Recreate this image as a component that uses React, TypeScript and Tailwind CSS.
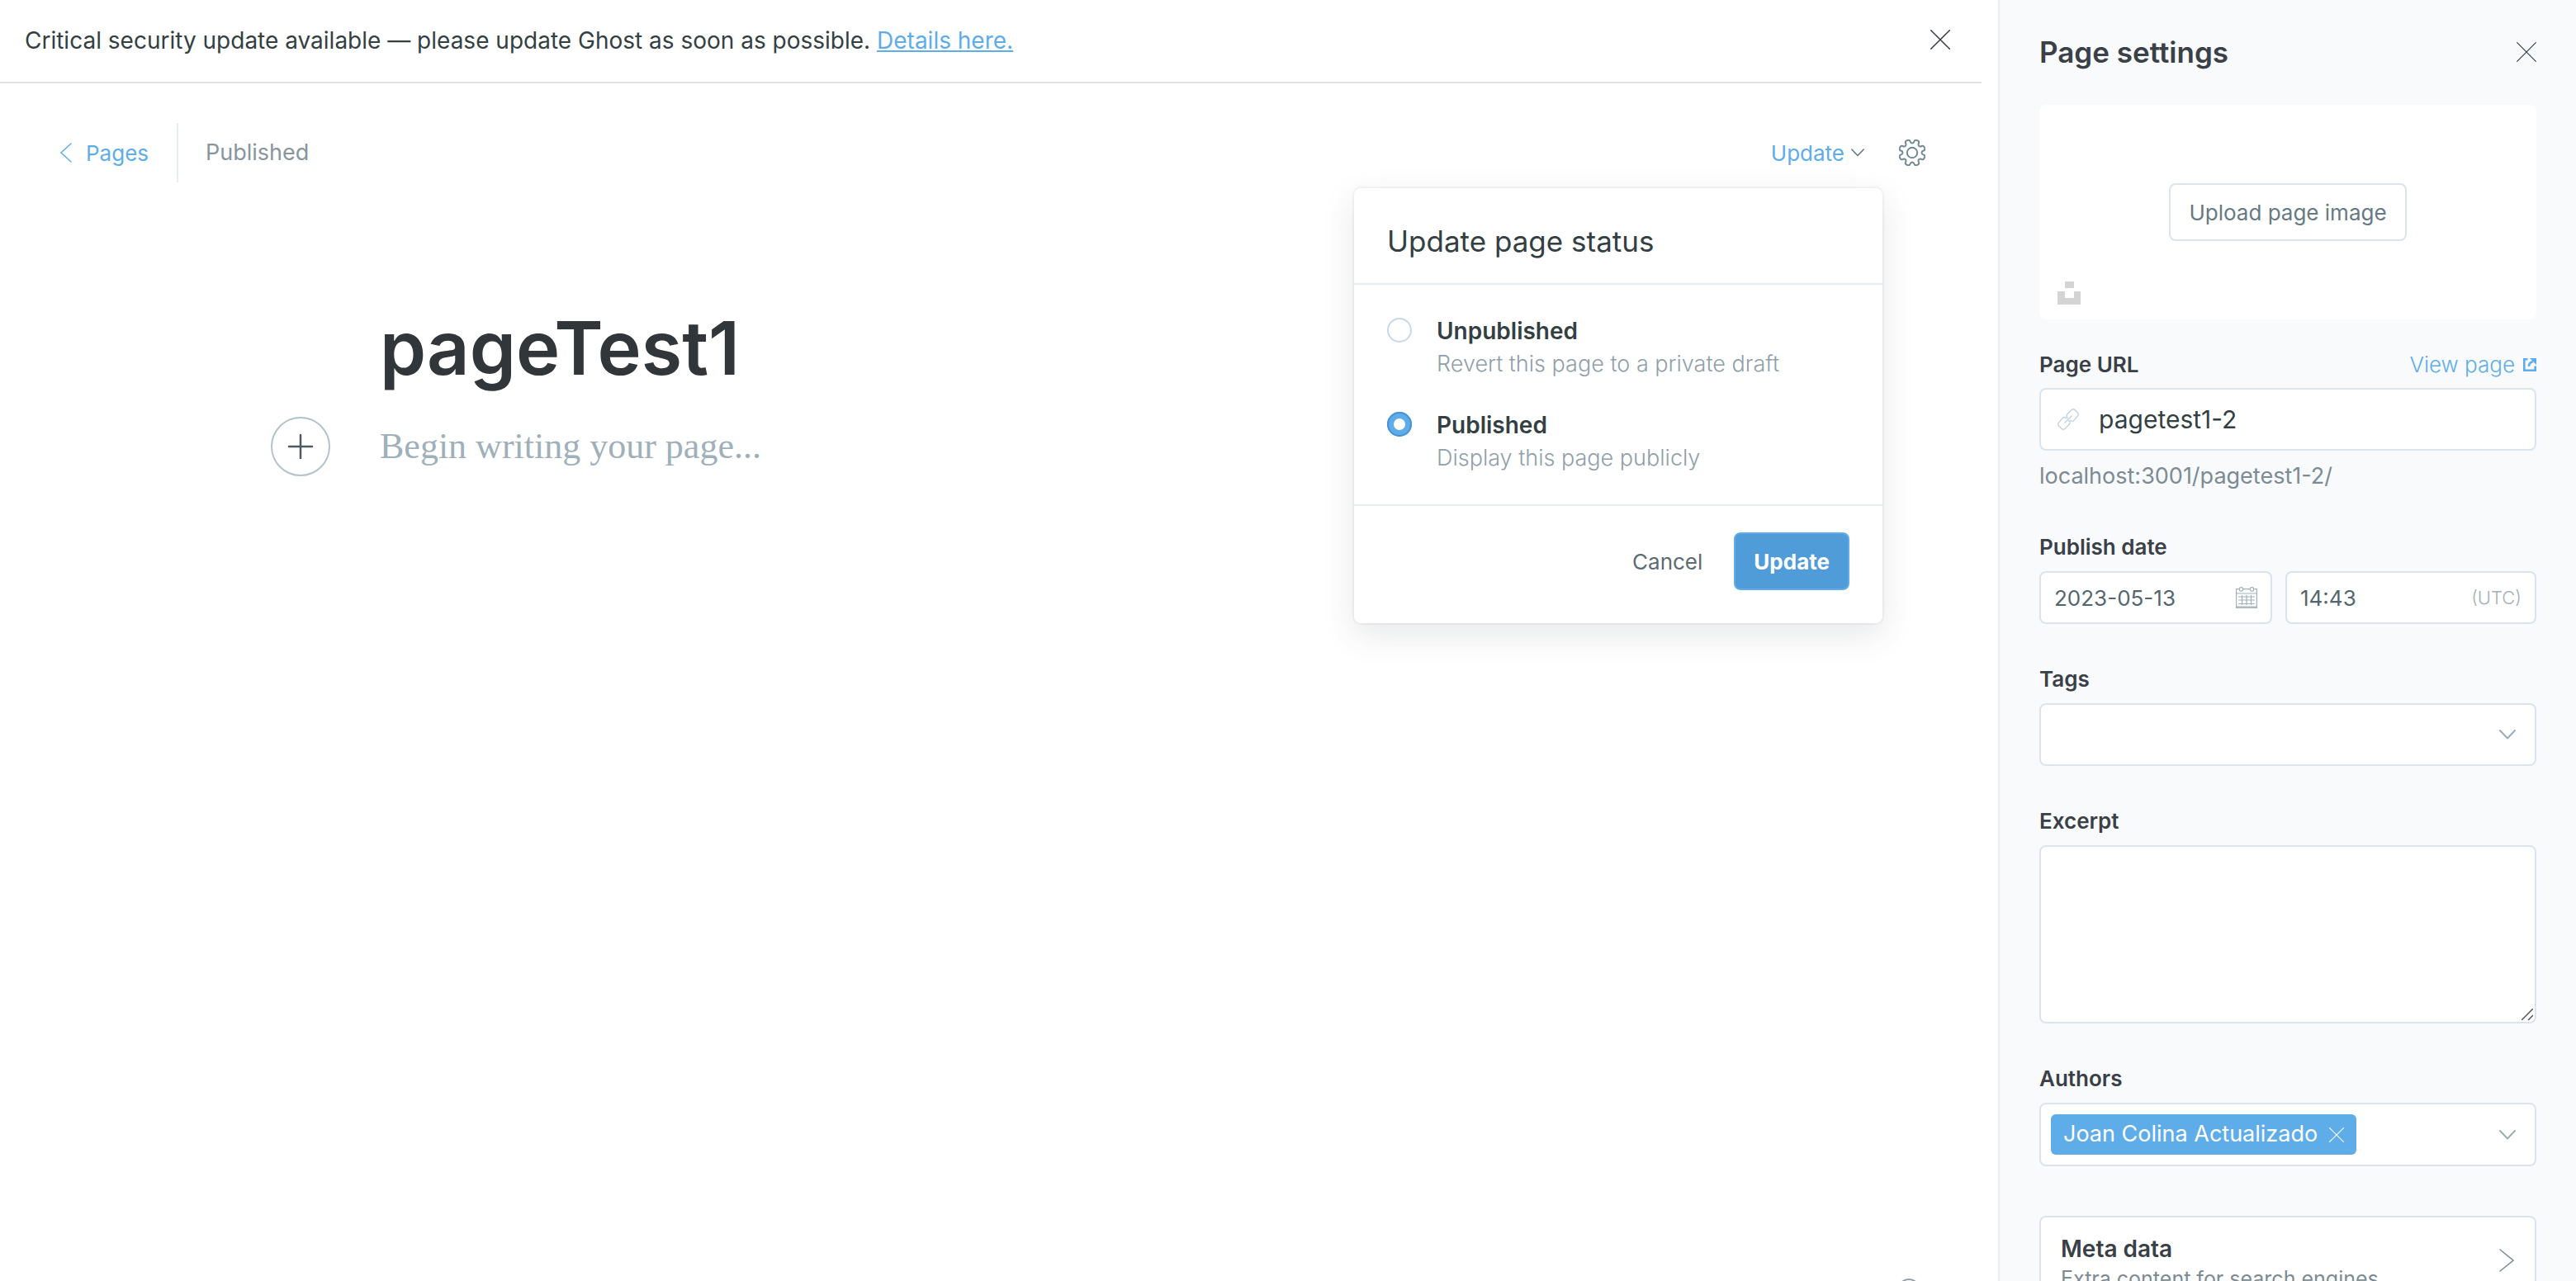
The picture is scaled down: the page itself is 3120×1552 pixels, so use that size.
import React, { useState } from "react";

type IconProps = { className?: string };

function Close({ className = "" }: IconProps) {
  return (
    <svg className={className} viewBox="0 0 24 24" fill="none" stroke="currentColor" aria-hidden="true">
      <path d="M.7.7l22.600 22.600M23.300.7L.7 23.300" strokeLinecap="round" />
    </svg>
  );
}

function ChevronDown({ className = "" }: IconProps) {
  return (
    <svg className={className} viewBox="0 0 20 12" fill="none" stroke="currentColor" aria-hidden="true">
      <path d="M1 1l9 9.500L19 1" strokeLinecap="round" strokeLinejoin="round" />
    </svg>
  );
}

// Eight-toothed cog outline: a polygon whose corners are rounded with quadratic curves.
function cogPath(center: number, outer: number, inner: number) {
  const points: [number, number][] = [];
  for (let tooth = 0; tooth < 8; tooth++) {
    const middle = 22.5 + tooth * 45;
    const corners: [number, number][] = [
      [-14, inner],
      [-11, outer],
      [11, outer],
      [14, inner],
    ];
    for (const [offset, radius] of corners) {
      const angle = ((middle + offset) * Math.PI) / 180;
      points.push([center + radius * Math.cos(angle), center + radius * Math.sin(angle)]);
    }
  }
  const between = (a: [number, number], b: [number, number]) =>
    `${((a[0] + b[0]) / 2).toFixed(2)} ${((a[1] + b[1]) / 2).toFixed(2)}`;
  const last = points[points.length - 1];
  let path = `M${between(last, points[0])}`;
  points.forEach((point, i) => {
    const next = points[(i + 1) % points.length];
    path += `Q${point[0].toFixed(2)} ${point[1].toFixed(2)} ${between(point, next)}`;
  });
  return path + "Z";
}

const COG = cogPath(16, 16.4, 11.6);

function Gear({ className = "" }: IconProps) {
  return (
    <svg className={className} viewBox="0 0 32 32" fill="none" stroke="currentColor" strokeWidth="2" aria-hidden="true">
      <path d={COG} />
      <circle cx="16" cy="16" r="6.200" />
    </svg>
  );
}

function ExternalLink({ className = "" }: IconProps) {
  return (
    <svg className={className} viewBox="0 0 16 16" fill="none" stroke="currentColor" strokeWidth="2.600" aria-hidden="true">
      <path d="M5.500 1.300H1.300v13.400h13.400V9.500" />
      <path d="M6.800 9.800c.3-3 2-5 5-5.800" />
      <path d="M8 0H16v8z" fill="currentColor" stroke="none" />
    </svg>
  );
}

function LinkIcon({ className = "" }: IconProps) {
  return (
    <svg className={className} viewBox="0 0 26 26" fill="none" stroke="currentColor" strokeWidth="1.400" strokeLinecap="round" strokeLinejoin="round" aria-hidden="true">
      <path d="M9 17l8-8" />
      <path d="M10.500 11.500L9.400 10.800a2.800 2.800 0 0 0-3.200.6L1.800 16.800a3.200 3.200 0 0 0 0 4.400l3 3a3.200 3.200 0 0 0 4.400 0l5-5.200a2.800 2.800 0 0 0 .3-3.500l-.7-1" />
      <path d="M15.500 14.500l1.100.7a2.800 2.800 0 0 0 3.200-.6l4.400-5.400a3.200 3.200 0 0 0 0-4.400l-3-3a3.200 3.200 0 0 0-4.400 0l-5 5.200a2.800 2.800 0 0 0-.3 3.500l.7 1" />
    </svg>
  );
}

function Calendar({ className = "" }: IconProps) {
  return (
    <svg className={className} viewBox="0 0 26 26" fill="none" stroke="currentColor" strokeWidth="1.200" aria-hidden="true">
      <path d="M4 2.600H.6V25.400h24.800V2.600H22M9 2.600h8M.6 8h24.800M.6 24h24.800" />
      <rect x="4.500" y=".6" width="4" height="4.600" rx="1.500" />
      <rect x="17.500" y=".6" width="4" height="4.600" rx="1.500" />
      <path d="M3 12h20M3 16h20M3 20.500h20M7.500 10v12M13 10v12M18.500 10v12" />
    </svg>
  );
}

const LABEL = "text-[26px] leading-[34px] font-semibold text-[#394047]";
const BOX = "rounded-lg border-2 border-[#dae4ea] bg-white";

function Banner() {
  return (
    <div className="flex items-center justify-between border-b-2 border-[#e1e1e1] pt-[29px] pr-[38px] pb-[30px] pl-[30px]">
      <p className="text-[28px] leading-10">
        Critical security update available — please update Ghost as soon as possible.{" "}
        <a href="#details" className="text-[#5eade9] underline">
          Details here.
        </a>
      </p>
      <button type="button" aria-label="Dismiss" className="self-start pt-[7px]">
        <Close className="size-6 text-[#343f44] [stroke-width:1.500]" />
      </button>
    </div>
  );
}

type Status = "unpublished" | "published";

const STATUSES: { id: Status; title: string; text: string }[] = [
  { id: "unpublished", title: "Unpublished", text: "Revert this page to a private draft" },
  { id: "published", title: "Published", text: "Display this page publicly" },
];

function StatusDialog() {
  const [status, setStatus] = useState<Status>("published");
  return (
    <div
      role="dialog"
      aria-labelledby="status-title"
      className="absolute top-full -right-[22px] mt-[7px] w-[640px] rounded-lg bg-white shadow-[0_0_0_2px_rgba(0,0,0,0.04),0_14px_40px_rgba(50,60,70,0.12)]"
    >
      <h2 id="status-title" className="border-b-2 border-[#e6eef2] px-10 pt-[41px] pb-[28px] text-[35px] leading-[46px]">
        Update page status
      </h2>
      <div className="flex flex-col gap-[34px] border-b-2 border-[#e6eef2] px-10 py-9">
        {STATUSES.map(({ id, title, text }) => (
          <label key={id} className="flex gap-[30px]">
            <input
              type="radio"
              name="status"
              checked={status === id}
              onChange={() => setStatus(id)}
              className="mt-1 size-[30px] shrink-0 appearance-none rounded-full border-2 border-[#c5d9e8] bg-white checked:border-[8px] checked:border-[#5eade9] checked:outline-2 checked:-outline-offset-2 checked:outline-[#4793d9]"
            />
            <span>
              <span className="block text-[28px] leading-10 font-semibold">{title}</span>
              <span className="block text-[27px] leading-10 font-light text-[#8fa0aa]">{text}</span>
            </span>
          </label>
        ))}
      </div>
      <div className="flex items-center justify-end gap-[38px] px-10 pt-8 pb-10">
        <button type="button" className="text-[26px] text-[#5d6b73]">
          Cancel
        </button>
        <button type="button" className="h-[70px] rounded-lg border-2 border-[#5eade9] bg-[#4f9cd8] px-[22px] text-[26px] font-bold text-white">
          Update
        </button>
      </div>
    </div>
  );
}

function EditorHeader() {
  return (
    <header className="flex items-center justify-between pt-12 pr-[68px] pl-[72px]">
      <div className="flex items-center">
        <a href="#pages" className="flex h-[72px] items-center gap-4 border-r-2 border-[#e6eef2] pr-[34px] text-[26px] text-[#5eade9]">
          <svg className="h-6 w-4" viewBox="0 0 16 24" fill="none" stroke="currentColor" strokeWidth="1.500" strokeLinecap="round" aria-hidden="true">
            <path d="M14 1L2 12l12 11" />
          </svg>
          Pages
        </a>
        <span className="pl-[33px] text-[27px] text-[#8795a1]">Published</span>
      </div>
      <div className="flex items-center gap-[42px]">
        <div className="relative flex h-[72px] items-center">
          <button type="button" className="flex items-center gap-2 text-[26px] text-[#5eade9]">
            Update
            <ChevronDown className="h-2.5 w-4 text-[#54738c] [stroke-width:1.800]" />
          </button>
          <StatusDialog />
        </div>
        <button type="button" aria-label="Settings">
          <Gear className="size-8 text-[#738a94]" />
        </button>
      </div>
    </header>
  );
}

function Editor() {
  return (
    <main className="mx-auto mt-[144px] w-full max-w-[1480px]">
      <input
        aria-label="Page title"
        defaultValue="pageTest1"
        className="block h-28 w-full bg-transparent text-[90px] font-semibold text-[#303639] outline-none"
      />
      <div className="mt-7 -ml-[132px] flex items-center gap-[60px]">
        <button type="button" aria-label="Add a card" className="flex size-[72px] shrink-0 items-center justify-center rounded-full border-2 border-[#b3c3cc]">
          <svg className="size-8" viewBox="0 0 32 32" stroke="#4f5b62" strokeWidth="2.500" strokeLinecap="round" aria-hidden="true">
            <path d="M16 2v28M2 16h28" />
          </svg>
        </button>
        <input
          aria-label="Page content"
          placeholder="Begin writing your page..."
          className="min-w-0 flex-1 bg-transparent font-['Liberation_Serif',serif] text-[44px] outline-none placeholder:text-[#a0b0ba]"
        />
      </div>
    </main>
  );
}

function Settings() {
  return (
    <aside className="flex w-[700px] shrink-0 flex-col overflow-hidden border-l-2 border-[#e6eef5] bg-[#f9fafc] px-12 pt-[41px]">
      <div className="flex items-center justify-between">
        <h2 className="text-[35px] leading-[44px] font-semibold text-[#394047]">Page settings</h2>
        <button type="button" aria-label="Close settings">
          <Close className="size-6 text-[#343f44] [stroke-width:1.200]" />
        </button>
      </div>

      <div className="relative mt-[42px] flex h-[260px] shrink-0 items-center justify-center rounded-lg bg-white">
        <button type="button" className="h-[70px] rounded-lg border-2 border-[#dae4ea] px-[22px] text-[26px] text-[#667a83]">
          Upload page image
        </button>
        <button type="button" aria-label="Choose from Unsplash" className="absolute bottom-[18px] left-[22px]">
          <svg className="size-7" viewBox="0 0 28 28" fill="#d4d4d4" aria-hidden="true">
            <path d="M9 0h11v8H9zM0 12h9v8h11v-8h8v16H0z" />
          </svg>
        </button>
      </div>

      <div className="mt-[38px] flex items-center justify-between">
        <label htmlFor="url" className={LABEL}>
          Page URL
        </label>
        <a href="#view" className="flex items-center gap-2.5 text-[26px] leading-[34px] font-light text-[#5eade9]">
          View page
          <ExternalLink className="size-4" />
        </a>
      </div>
      <div className={`mt-[11px] flex h-[76px] shrink-0 items-center gap-6 pl-5 ${BOX}`}>
        <LinkIcon className="size-[26px] shrink-0 text-[#c3d3de]" />
        <input id="url" defaultValue="pagetest1-2" className="min-w-0 flex-1 bg-transparent text-[30px] outline-none" />
      </div>
      <p className="mt-3.5 mb-0.5 text-[27px] leading-[34px] text-[#7c8b94]">localhost:3001/pagetest1-2/</p>

      <p className={`mt-[50px] ${LABEL}`}>Publish date</p>
      <div className="mt-3 flex gap-4">
        <div className={`flex h-16 w-[282px] items-center px-4 ${BOX}`}>
          <input aria-label="Publish date" defaultValue="2023-05-13" className="min-w-0 flex-1 bg-transparent text-[26px] text-[#54666d] outline-none" />
          <Calendar className="size-[26px] shrink-0 text-[#a3b1b8]" />
        </div>
        <div className={`flex h-16 min-w-0 flex-1 items-center px-4 ${BOX}`}>
          <input aria-label="Publish time" defaultValue="14:43" className="min-w-0 flex-1 bg-transparent text-[26px] text-[#54666d] outline-none" />
          <span className="text-[22px] font-light text-[#a3b1b8]">(UTC)</span>
        </div>
      </div>

      <label htmlFor="tags" className={`mt-[50px] ${LABEL}`}>
        Tags
      </label>
      <div className={`mt-3 grid h-[76px] shrink-0 items-center ${BOX}`}>
        <select id="tags" defaultValue="" className="col-start-1 row-start-1 h-full w-full appearance-none bg-transparent outline-none">
          <option value="" />
        </select>
        <ChevronDown className="pointer-events-none col-start-1 row-start-1 mr-[23px] h-3 w-5 justify-self-end text-[#9baeb8] [stroke-width:2]" />
      </div>

      <label htmlFor="excerpt" className={`mt-[50px] ${LABEL}`}>
        Excerpt
      </label>
      <div className="relative mt-3 flex shrink-0">
        <textarea id="excerpt" className={`h-[216px] w-full resize-none p-4 text-[28px] outline-none ${BOX}`} />
        <svg className="pointer-events-none absolute right-1 bottom-1 size-[14px]" viewBox="0 0 14 14" stroke="#555" strokeWidth="1.500" aria-hidden="true">
          <path d="M0 14L14 0M8 14l6-6" />
        </svg>
      </div>

      <p className={`mt-[50px] ${LABEL}`}>Authors</p>
      <div className={`mt-3 flex h-[77px] shrink-0 items-center justify-between pr-[23px] pl-3 ${BOX}`}>
        <span className="flex h-[49px] items-center gap-3.5 rounded-md bg-[#5eade9] px-[15px] text-[27px] text-white">
          Joan Colina Actualizado
          <button type="button" aria-label="Remove Joan Colina Actualizado" className="flex">
            <Close className="size-[18px] text-white [stroke-width:1.500]" />
          </button>
        </span>
        <button type="button" aria-label="Show authors">
          <ChevronDown className="h-3 w-5 text-[#9baeb8] [stroke-width:2]" />
        </button>
      </div>

      <button type="button" className={`mt-[60px] flex shrink-0 items-start justify-between py-5 pr-[25px] pl-6 text-left ${BOX}`}>
        <span>
          <span className="block text-[28px] leading-9 font-semibold text-[#394047]">Meta data</span>
          <span className="block text-[25px] leading-9 text-[#7c8b94]">Extra content for search engines</span>
        </span>
        <svg className="mt-[18px] h-7 w-[18px]" viewBox="0 0 18 28" fill="none" stroke="#7c8b94" strokeWidth="1.500" strokeLinecap="round" aria-hidden="true">
          <path d="M1 1l16 13L1 27" />
        </svg>
      </button>
    </aside>
  );
}

export default function App() {
  return (
    <div className="flex h-screen overflow-hidden bg-white font-['Inter',sans-serif] text-[#343f44]">
      <div className="relative mr-5 flex min-w-0 flex-1 flex-col">
        <Banner />
        <EditorHeader />
        <Editor />
        <button type="button" aria-label="Help" className="absolute right-[74px] -bottom-[25px] size-7 rounded-full border-2 border-[#8fa0aa]" />
      </div>
      <Settings />
    </div>
  );
}
